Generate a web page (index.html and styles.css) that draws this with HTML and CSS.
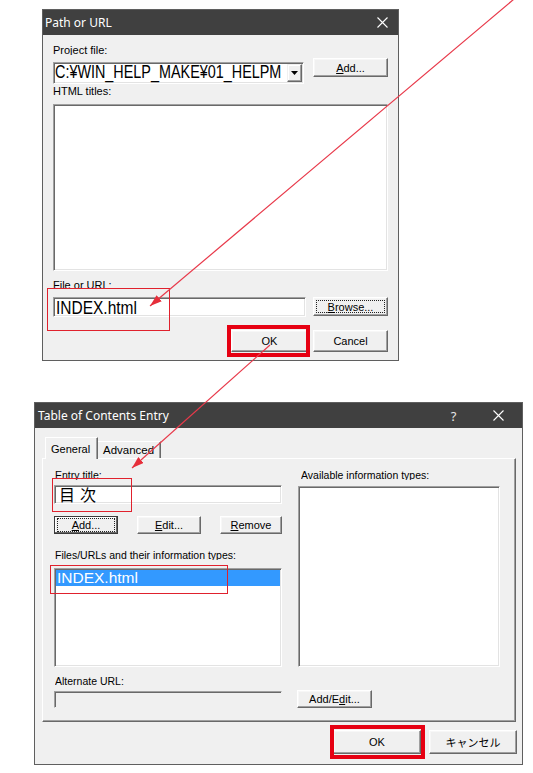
FILE: index.html
```html
<!DOCTYPE html>
<html lang="ja">
<head>
<meta charset="utf-8">
<title>Path or URL / Table of Contents Entry</title>
<link rel="stylesheet" href="styles.css">
</head>
<body>
<div class="canvas">
  <section class="dlg dlg1">
    <header class="titlebar">
      <span class="title">Path or URL</span>
      <span class="cap-btn cap-close1"><svg width="11" height="11" viewBox="0 0 11 11"><path d="M0.5 0.5 L10.5 10.5 M10.5 0.5 L0.5 10.5" stroke="#fff" stroke-width="1.1" fill="none"/></svg></span>
    </header>
    <div class="body1">
      <div class="lbl"><span class="clip">Project file:</span></div>
      <div class="row row-project">
        <div class="combo sunk">
          <span class="combo-text"><span class="tall tall-combo">C:¥WIN_HELP_MAKE¥01_HELPM</span></span>
          <span class="dd-btn"><svg width="7" height="4" viewBox="0 0 7 4"><path d="M0 0 H7 L3.5 4 Z" fill="#000"/></svg></span>
        </div>
        <div class="btn b-side"><span><u>A</u>dd...</span></div>
      </div>
      <div class="lbl"><span class="clip">HTML titles:</span></div>
      <div class="listbox sunk"></div>
      <div class="lbl lbl-file"><span class="clip">File or URL:</span></div>
      <div class="row row-file">
        <div class="field sunk"><span class="tall tall-field">INDEX.html</span></div>
        <div class="btn b-side"><span class="ring"><u>B</u>rowse...</span></div>
      </div>
      <div class="actions1">
        <div class="btn b-ok1">OK</div>
        <div class="btn b-cancel1">Cancel</div>
      </div>
    </div>
    <div class="hl hl-file1"></div>
    <div class="hl-thick hl-ok1"></div>
  </section>

  <section class="dlg dlg2">
    <header class="titlebar">
      <span class="title title2">Table of Contents Entry</span>
      <span class="cap-btn cap-help">?</span>
      <span class="cap-btn cap-close2"><svg width="11" height="11" viewBox="0 0 11 11"><path d="M0.5 0.5 L10.5 10.5 M10.5 0.5 L0.5 10.5" stroke="#fff" stroke-width="1.1" fill="none"/></svg></span>
    </header>
    <div class="body2">
      <div class="tabs">
        <div class="tab tab-active">General</div>
        <div class="tab tab-adv">Advanced</div>
      </div>
      <div class="panel">
        <div class="col-left">
          <div class="lbl2"><span class="clip">Entry title:</span></div>
          <div class="field2 sunk"><span class="jp-text">目次</span></div>
          <div class="btn-row">
            <div class="btn b3 b-default"><span class="ring"><u>A</u>dd...</span></div>
            <div class="btn b3"><span><u>E</u>dit...</span></div>
            <div class="btn b3 b-remove"><span><u>R</u>emove</span></div>
          </div>
          <div class="lbl2 mt-files"><span class="clip">Files/URLs and their information types:</span></div>
          <div class="list2 sunk"><div class="sel-row">INDEX.html</div></div>
          <div class="lbl2 mt-alt"><span class="clip">Alternate URL:</span></div>
          <div class="field-dis"></div>
        </div>
        <div class="col-right">
          <div class="lbl2 lbl-right"><span class="clip">Available information types:</span></div>
          <div class="types-box sunk"></div>
          <div class="btn b-addedit"><span>Add/E<u>d</u>it...</span></div>
        </div>
      </div>
      <div class="actions2">
        <div class="btn b-ok2">OK</div>
        <div class="btn b-cancel2">キャンセル</div>
      </div>
    </div>
    <div class="hl hl-entry"></div>
    <div class="hl hl-list"></div>
    <div class="hl-thick hl-ok2"></div>
  </section>

  <svg class="arrows" width="533" height="773" viewBox="0 0 533 773">
    <defs>
      <marker id="ah" viewBox="0 0 12 8" refX="12" refY="4" markerWidth="12" markerHeight="8" markerUnits="userSpaceOnUse" orient="auto">
        <path d="M0 0 L12 4 L0 8 Z" fill="#e62e3a"/>
      </marker>
    </defs>
    <line x1="520" y1="-6" x2="150" y2="306" stroke="#e8394a" stroke-width="1.2" marker-end="url(#ah)"/>
    <line x1="270" y1="345" x2="132" y2="468" stroke="#e8394a" stroke-width="1.2" marker-end="url(#ah)"/>
  </svg>
</div>
</body>
</html>
```
FILE: styles.css
```css
* { box-sizing: border-box; }
body { margin: 0; background: #fff; }

.canvas {
  position: relative;
  width: 533px;
  height: 773px;
  padding-top: 9px;
  display: flex;
  flex-direction: column;
  align-items: flex-start;
  overflow: hidden;
  font-family: "Liberation Sans", Arial, sans-serif;
  font-size: 11px;
  color: #000;
}

.dlg {
  position: relative;
  display: flex;
  flex-direction: column;
  background: #f0f0f0;
  border: 1px solid #5f5f5f;
}
.dlg1 { margin-left: 42px; width: 357px; height: 352px; }
.dlg2 { margin-left: 34px; margin-top: 41px; width: 489px; height: 363px; }

/* title bars */
.titlebar {
  flex: none;
  height: 25px;
  display: flex;
  align-items: center;
  background: #404040;
  color: #fff;
  font-family: "Noto Sans", "Open Sans", sans-serif;
  font-size: 12px;
}
.title { flex: 1; padding-left: 2px; white-space: nowrap; }
.title2 { padding-left: 3px; }
.cap-btn { height: 100%; display: flex; align-items: center; justify-content: center; }
.cap-close1 { width: 32px; }
.cap-help { width: 45px; font-size: 13px; color: #e6e6e6; }
.cap-close2 { width: 45px; margin-right: 1px; }

/* common controls */
.lbl { height: 14px; line-height: 14px; white-space: nowrap; }
.clip { display: block; height: 12px; overflow: hidden; }
.row { display: flex; justify-content: space-between; align-items: flex-start; }

.sunk {
  background: #fff;
  border: 1px solid;
  border-color: #a0a0a0 #fff #fff #a0a0a0;
  box-shadow: inset 1px 1px 0 #696969, inset -1px -1px 0 #e3e3e3;
}

.btn {
  display: flex;
  align-items: center;
  justify-content: center;
  background: #f0f0f0;
  border: 1px solid;
  border-color: #fff #696969 #696969 #fff;
  box-shadow: inset -1px -1px 0 #a0a0a0, inset 1px 1px 0 #f7f7f7;
  white-space: nowrap;
  font-size: 11px;
}
.ring {
  align-self: stretch;
  flex: 1;
  margin: 2px;
  border: 1px dotted #222;
  display: flex;
  align-items: center;
  justify-content: center;
}

.tall { display: inline-block; transform-origin: left center; white-space: nowrap; }

/* dialog 1 */
.body1 { flex: 1; display: flex; flex-direction: column; padding: 8px 10px 0 10px; }
.row-project { margin-top: 1px; }
.combo { margin-top: 4px; width: 251px; height: 22px; display: flex; align-items: center; }
.combo-text { flex: 1; white-space: nowrap; padding-left: 1px; line-height: 17px; }
.tall-combo { font-size: 14.4px; line-height: 17px; transform: scaleY(1.3); }
.dd-btn {
  flex: none;
  width: 15px;
  height: 18px;
  margin-right: 1px;
  display: flex;
  align-items: center;
  justify-content: center;
  background: #f0f0f0;
  border: 1px solid;
  border-color: #f0f0f0 #696969 #696969 #f0f0f0;
  box-shadow: inset -1px -1px 0 #a0a0a0, inset 1px 1px 0 #fff;
}
.b-side { width: 75px; height: 19px; }
.listbox { margin-top: 6px; height: 167px; }
.lbl-file { margin-top: 7px; }
.row-file { margin-top: 5px; }
.field { width: 253px; height: 20px; display: flex; align-items: center; padding-left: 2px; }
.tall-field { font-size: 15.5px; line-height: 17px; transform: scaleY(1.2); }
.actions1 { display: flex; justify-content: flex-end; gap: 5px; margin-top: 13px; }
.b-ok1 { width: 77px; height: 22px; }
.b-cancel1 { width: 75px; height: 22px; }

/* dialog 2 */
.body2 { flex: 1; display: flex; flex-direction: column; padding: 9px 5px 0 7px; }
.tabs { display: flex; align-items: flex-end; height: 21px; margin-left: 3px; }
.tab {
  height: 17px;
  padding-left: 5px;
  display: flex;
  align-items: center;
  background: #f0f0f0;
  border: 1px solid;
  border-bottom: 0;
  border-color: #fff #696969 #fff #fff;
  box-shadow: inset -1px 0 0 #a0a0a0;
  font-size: 11.5px;
  white-space: nowrap;
}
.tab-active { position: relative; z-index: 1; width: 53px; height: 22px; margin-bottom: -1px; font-size: 11px; }
.tab-adv { width: 63px; border-left: 0; }

.panel {
  width: 474px;
  height: 264px;
  display: flex;
  gap: 16px;
  padding: 9px 0 0 11px;
  border: 1px solid;
  border-color: #fff #696969 #696969 #fff;
  box-shadow: inset -1px -1px 0 #a0a0a0;
}
.col-left { width: 228px; display: flex; flex-direction: column; }
.col-right { width: 202px; display: flex; flex-direction: column; }
.lbl2 { height: 14px; line-height: 14px; font-size: 10.5px; padding-left: 1px; white-space: nowrap; }
.lbl-right { padding-left: 3px; }

.field2 { margin-top: 3px; height: 19px; display: flex; align-items: center; padding-left: 4px; }
.jp-text { font-family: "Noto Sans CJK JP", sans-serif; font-size: 16px; line-height: 17px; letter-spacing: 5px; }

.btn-row { margin-top: 12px; display: flex; justify-content: space-between; }
.b3 { width: 64px; height: 18px; }
.b-remove { width: 62px; }
.b-default { border-color: #3a3a3a; box-shadow: inset -1px -1px 0 #696969, inset 1px 1px 0 #fff; }
.b-default .ring { margin: 1px 2px; }

.mt-files { margin-top: 14px; }
.list2 { margin-top: 6px; height: 99px; padding: 1px 1px 0 1px; }
.sel-row {
  height: 16px;
  background: #3399ff;
  color: #fff;
  font-size: 15.5px;
  line-height: 16px;
  padding-left: 1px;
  white-space: nowrap;
}
.mt-alt { margin-top: 7px; }
.field-dis {
  margin-top: 3px;
  height: 17px;
  border: 1px solid;
  border-color: #a0a0a0 transparent transparent #a0a0a0;
  box-shadow: inset 1px 1px 0 #696969;
}

.types-box { margin-top: 4px; height: 181px; }
.b-addedit { margin-top: 23px; margin-left: -1px; width: 75px; height: 18px; }

.actions2 { display: flex; justify-content: flex-end; gap: 8px; margin-top: 8px; }
.b-ok2 { width: 88px; height: 24px; }
.b-cancel2 { width: 88px; height: 24px; font-family: "Noto Sans CJK JP", sans-serif; font-size: 11px; }

/* red annotation overlays */
.hl { position: absolute; border: 1px solid #e0212d; z-index: 5; pointer-events: none; }
.hl-thick { position: absolute; border: 4px solid #e60012; z-index: 5; pointer-events: none; }
.hl-file1 { left: 4px; top: 278px; width: 123px; height: 43px; }
.hl-ok1 { left: 184px; top: 315px; width: 83px; height: 32px; }
.hl-entry { left: 17px; top: 75px; width: 80px; height: 34px; }
.hl-list { left: 15px; top: 162px; width: 178px; height: 29px; }
.hl-ok2 { left: 295px; top: 322px; width: 95px; height: 34px; }

.arrows { position: absolute; left: 0; top: 0; pointer-events: none; z-index: 10; }
```
